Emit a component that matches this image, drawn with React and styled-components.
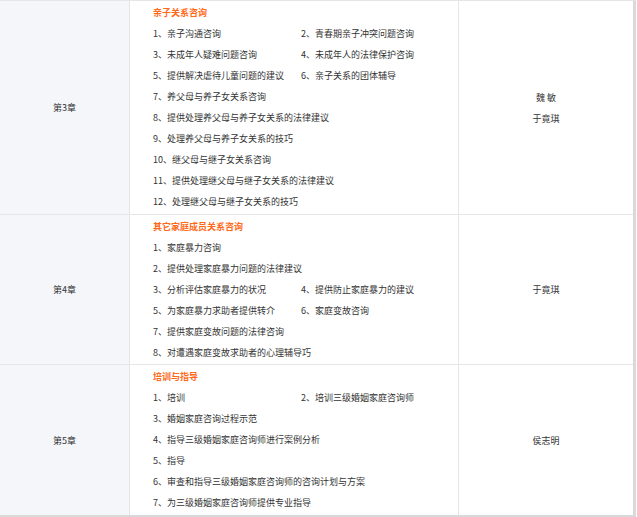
import React from "react";
import styled, { createGlobalStyle } from "styled-components";

const Global = createGlobalStyle`
  html, body { margin: 0; padding: 0; background: #fff; }
  body { font-family: "Microsoft YaHei", "Noto Sans CJK SC", "Liberation Sans", sans-serif; }
`;

const Table = styled.div`
  width: 633px;
  border-right: 3px solid #d9d9d9;
  border-bottom: 3px solid #d9d9d9;
  border-top: 1px solid #e6e6e6;
  display: grid;
  grid-template-columns: 130px 329px 174px;
`;

const Chapter = styled.div`
  background: #f5f6fa;
  display: flex;
  align-items: center;
  justify-content: center;
  font-size: 9px;
  color: #333;
  border-right: 1px solid #e6e6e6;
  border-bottom: ${(p) => (p.$last ? "none" : "1px solid #e6e6e6")};
  height: ${(p) => p.$h}px;
  box-sizing: border-box;
`;

const Content = styled.div`
  padding: 2px 0 0 23px;
  border-right: 1px solid #e6e6e6;
  border-bottom: ${(p) => (p.$last ? "none" : "1px solid #e6e6e6")};
  box-sizing: border-box;
  height: ${(p) => p.$h}px;
`;

const Title = styled.div`
  color: #ff6a1a;
  font-weight: bold;
  font-size: 9px;
  line-height: 20px;
`;

const Line = styled.div`
  display: flex;
  font-size: 9px;
  color: #333;
  line-height: 21px;
  white-space: nowrap;
`;

const Item = styled.span`
  width: ${(p) => (p.$fixed ? "148px" : "auto")};
`;

const Teacher = styled.div`
  display: flex;
  flex-direction: column;
  align-items: center;
  justify-content: center;
  font-size: 9px;
  color: #333;
  line-height: 21px;
  border-bottom: ${(p) => (p.$last ? "none" : "1px solid #e6e6e6")};
  box-sizing: border-box;
  height: ${(p) => p.$h}px;
`;

const rows = [
  {
    ch: "第3章", h: 214, title: "亲子关系咨询", teachers: ["魏 敏", "于竟琪"],
    lines: [
      ["1、亲子沟通咨询", "2、青春期亲子冲突问题咨询"],
      ["3、未成年人疑难问题咨询", "4、未成年人的法律保护咨询"],
      ["5、提供解决虐待儿童问题的建议", "6、亲子关系的团体辅导"],
      ["7、养父母与养子女关系咨询"],
      ["8、提供处理养父母与养子女关系的法律建议"],
      ["9、处理养父母与养子女关系的技巧"],
      ["10、继父母与继子女关系咨询"],
      ["11、提供处理继父母与继子女关系的法律建议"],
      ["12、处理继父母与继子女关系的技巧"],
    ],
  },
  {
    ch: "第4章", h: 150, title: "其它家庭成员关系咨询", teachers: ["于竟琪"],
    lines: [
      ["1、家庭暴力咨询"],
      ["2、提供处理家庭暴力问题的法律建议"],
      ["3、分析评估家庭暴力的状况", "4、提供防止家庭暴力的建议"],
      ["5、为家庭暴力求助者提供转介", "6、家庭变故咨询"],
      ["7、提供家庭变故问题的法律咨询"],
      ["8、对遭遇家庭变故求助者的心理辅导巧"],
    ],
  },
  {
    ch: "第5章", h: 150, title: "培训与指导", teachers: ["侯志明"],
    lines: [
      ["1、培训", "2、培训三级婚姻家庭咨询师"],
      ["3、婚姻家庭咨询过程示范"],
      ["4、指导三级婚姻家庭咨询师进行案例分析"],
      ["5、指导"],
      ["6、审查和指导三级婚姻家庭咨询师的咨询计划与方案"],
      ["7、为三级婚姻家庭咨询师提供专业指导"],
    ],
  },
];

export default function App() {
  return (
    <>
      <Global />
      <Table>
        {rows.map((r, i) => {
          const last = i === rows.length - 1;
          return (
            <React.Fragment key={r.ch}>
              <Chapter $h={r.h} $last={last}>{r.ch}</Chapter>
              <Content $h={r.h} $last={last}>
                <Title>{r.title}</Title>
                {r.lines.map((l, j) => (
                  <Line key={j}>
                    {l.map((t, k) => (
                      <Item key={k} $fixed={l.length > 1 && k === 0}>{t}</Item>
                    ))}
                  </Line>
                ))}
              </Content>
              <Teacher $h={r.h} $last={last}>
                {r.teachers.map((t) => <div key={t}>{t}</div>)}
              </Teacher>
            </React.Fragment>
          );
        })}
      </Table>
    </>
  );
}
